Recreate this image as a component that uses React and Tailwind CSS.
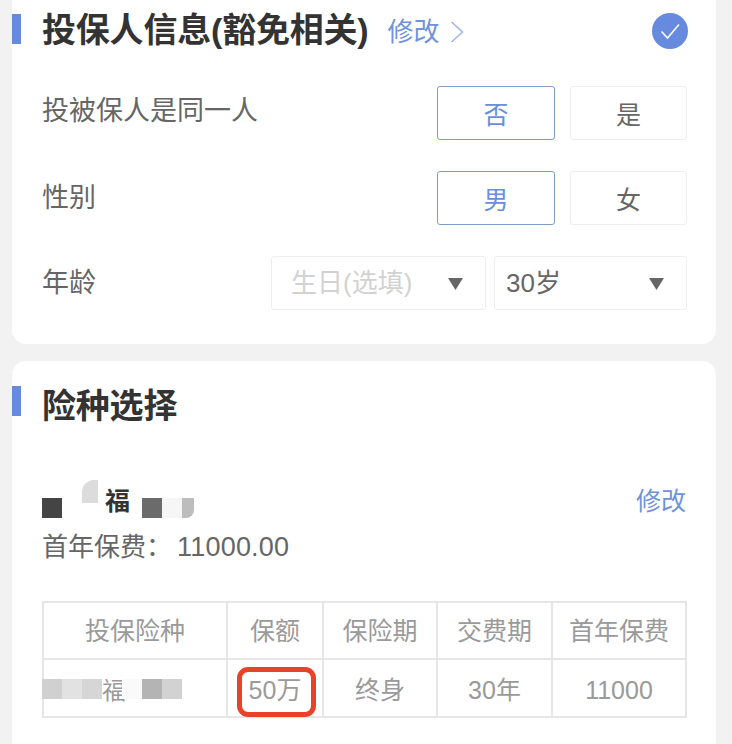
import React from 'react';

const FONT = "font-['Liberation_Sans','Noto_Sans_CJK_SC',sans-serif]";

function SectionTitle({ children, barClass = '', extra = null }) {
  return (
    <div className="flex items-center">
      <div className={`w-[9px] h-[30px] bg-[#658ade] ${barClass}`} />
      <div className="ml-[21px] text-[34px] leading-[40px] font-bold text-[#333] whitespace-nowrap tracking-[-0.2px]">
        {children}
      </div>
      {extra}
    </div>
  );
}

function Choice({ label, active }) {
  return (
    <div
      className={`h-[54px] pt-[5px] flex items-center justify-center rounded-[3px] border text-[25px] ${
        active ? 'w-[118px] border-[#7f9cc4] text-[#6a8fd8]' : 'w-[117px] border-[#eeeeee] text-[#666]'
      }`}
    >
      {label}
    </div>
  );
}

function Row({ label, children, className = '', labelClass = '' }) {
  return (
    <div className={`flex items-center justify-between pl-[30px] pr-[29px] ${className}`}>
      <div className={`text-[27px] leading-[32px] text-[#666] whitespace-nowrap ${labelClass}`}>{label}</div>
      <div className="flex gap-[15px]">{children}</div>
    </div>
  );
}

function Select({ label, muted, width }) {
  return (
    <div
      className={`h-[54px] flex items-center justify-between pr-[22px] rounded-[3px] border border-[#eeeeee] text-[26px] ${width} ${
        muted ? 'pl-[19px] text-[#d2d2d2]' : 'pl-[11px] text-[#666]'
      }`}
    >
      <span className="whitespace-nowrap">{label}</span>
      <svg width="15" height="12" viewBox="0 0 15 12" className="mt-[2px]">
        <path d="M0 0h15L7.5 12z" fill="#666" />
      </svg>
    </div>
  );
}

const HEAD = ['投保险种', '保额', '保险期', '交费期', '首年保费'];
const COLS = 'grid grid-cols-[184px_96px_114px_115px_1fr]';

function Cell({ children, last, className = '' }) {
  return (
    <div
      className={`flex items-center justify-center text-[25px] text-[#9a9a9a] ${
        last ? '' : 'border-r-2 border-[#e6e6e6]'
      } ${className}`}
    >
      {children}
    </div>
  );
}

export default function App() {
  return (
    <div className={`w-[732px] h-[744px] overflow-hidden bg-[#f2f2f2] ${FONT}`}>
      {/* insured info card, cut off by the top of the screen */}
      <div className="ml-[12px] w-[704px] h-[344px] bg-white rounded-b-[14px] pt-[10px]">
        <div className="flex items-center justify-between pr-[28px]">
          <SectionTitle
            barClass="mb-[2px]"
            extra={
              <div className="ml-[19px] pt-[3px] flex items-center text-[26px] leading-[34px] text-[#6f93da]">
                <span>修改</span>
                <svg width="14" height="22" viewBox="0 0 14 22" className="ml-[11px]">
                  <path d="M1.5 1l11 10-11 10" fill="none" stroke="#9db4e2" strokeWidth="1.5" />
                </svg>
              </div>
            }
          >
            投保人信息(豁免相关)
          </SectionTitle>
          <svg width="36" height="36" viewBox="0 0 36 36" className="mt-[2px]">
            <circle cx="18" cy="18" r="18" fill="#658ade" />
            <path d="M9.5 18.5l6 6.5L27 11.5" fill="none" stroke="#fff" strokeWidth="1.6" />
          </svg>
        </div>
        <Row label="投被保人是同一人" labelClass="pb-[5px]" className="mt-[36px]">
          <Choice label="否" active />
          <Choice label="是" />
        </Row>
        <Row label="性别" className="mt-[31px]">
          <Choice label="男" active />
          <Choice label="女" />
        </Row>
        <Row label="年龄" className="mt-[31px]">
          <div className="flex gap-[8px]">
            <Select label="生日(选填)" muted width="w-[215px]" />
            <Select label="30岁" width="w-[193px]" />
          </div>
        </Row>
      </div>

      {/* plan selection card */}
      <div className="ml-[12px] w-[704px] h-[400px] mt-[17px] bg-white rounded-t-[14px] pt-[25px]">
        <SectionTitle barClass="mb-[10px]">险种选择</SectionTitle>

        <div className="mt-[54px] pl-[30px] pr-[30px] flex items-start justify-between">
          {/* product name, pixelated in the screenshot */}
          <div className="flex items-end h-[38px] text-[#333]">
            <div className="w-[20px] h-[20px] bg-[#444]" />
            <div className="w-[20px] h-[20px] bg-white" />
            <div className="w-[16px] h-[23px] mb-[15px] rounded-tl-[12px] bg-[#dcdcdc]" />
            <div className="ml-[7px] w-[25px] mb-[2px] text-[25px] leading-[30px] font-bold">福</div>
            <div className="w-[12px] h-[20px]" />
            <div className="w-[20px] h-[20px] bg-[#6b6b6b]" />
            <div className="w-[20px] h-[20px] bg-[#f6f6f6]" />
            <div className="w-[12px] h-[20px] rounded-br-[8px] bg-[#bdbdbd]" />
          </div>
          <div className="mt-[5px] text-[25px] leading-[32px] text-[#6f93da]">修改</div>
        </div>

        <div className="mt-[13px] ml-[30px] flex items-center text-[26px] leading-[32px] text-[#666]">
          <span>首年保费：</span>
          <span className="ml-[5px] text-[27px] tracking-[0.2px]">11000.00</span>
        </div>

        <div className="relative mt-[38px] ml-[30px] w-[645px] h-[117px] border-2 border-[#e6e6e6]">
          <div className={`${COLS} h-[57px] border-b-2 border-[#e6e6e6]`}>
            {HEAD.map((h, i) => (
              <Cell key={h} last={i === HEAD.length - 1} className="pt-[3px]">{h}</Cell>
            ))}
          </div>
          <div className={`${COLS} h-[56px]`}>
            <Cell className="!justify-start pt-[2px]">
              <div className="-ml-[2px] flex items-center h-[20px]">
                <div className="w-[20px] h-[20px] bg-[#d0d0d0]" />
                <div className="w-[20px] h-[20px] bg-[#e2e2e2]" />
                <div className="w-[20px] h-[20px] bg-[#d6d6d6]" />
                <div className="w-[20px] mt-[4px] text-[24px] leading-[20px] text-[#999]">福</div>
                <div className="w-[20px] h-[20px] bg-[#fafafa]" />
                <div className="w-[20px] h-[20px] bg-[#b4b4b4]" />
                <div className="w-[20px] h-[20px] bg-[#d2d2d2]" />
              </div>
            </Cell>
            <Cell className="pt-[5px]">50万</Cell>
            <Cell className="pt-[5px]">终身</Cell>
            <Cell className="pt-[5px]">30年</Cell>
            <Cell last className="pt-[5px]">11000</Cell>
          </div>
          {/* hand-drawn highlight around the sum insured */}
          <div className="absolute left-[193px] top-[64px] w-[79px] h-[50px] border-[5px] border-[#e8432a] rounded-[11px]" />
        </div>
      </div>
    </div>
  );
}
